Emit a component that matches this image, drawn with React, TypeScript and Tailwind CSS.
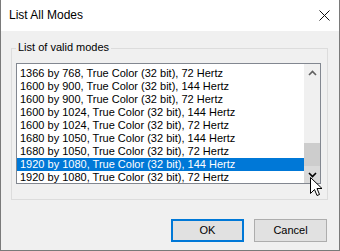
import React from "react";

const modes = [
  "1366 by 768, True Color (32 bit), 72 Hertz",
  "1600 by 900, True Color (32 bit), 144 Hertz",
  "1600 by 900, True Color (32 bit), 72 Hertz",
  "1600 by 1024, True Color (32 bit), 144 Hertz",
  "1600 by 1024, True Color (32 bit), 72 Hertz",
  "1680 by 1050, True Color (32 bit), 144 Hertz",
  "1680 by 1050, True Color (32 bit), 72 Hertz",
  "1920 by 1080, True Color (32 bit), 144 Hertz",
  "1920 by 1080, True Color (32 bit), 72 Hertz",
];

export default function App() {
  return (
    <div
      className="relative w-[340px] h-[251px] flex flex-col border-x border-b border-[#7a7a7a] bg-[#f0f0f0] text-black overflow-hidden"
      style={{ fontFamily: '"Liberation Sans", Arial, sans-serif' }}
    >
      {/* Title bar */}
      <div className="h-[31px] shrink-0 bg-white flex items-center justify-between pl-[8px] pr-[9px]">
        <span className="text-[12px] leading-[14px] mt-[-1px]">List All Modes</span>
        <svg width="11" height="11" viewBox="0 0 11 11" className="mt-[-1px]">
          <path d="M0.5 0.5 L10.5 10.5 M10.5 0.5 L0.5 10.5" stroke="#111" strokeWidth="1" fill="none" />
        </svg>
      </div>

      {/* Body */}
      <div className="flex-1 flex flex-col pl-[10px] pr-[11px]">
        {/* Group box */}
        <div className="relative mt-[17px] h-[152px] border border-[#dcdcdc] pl-[4px] pt-[14px]">
          <span className="absolute left-[4px] top-[-8px] px-[2px] bg-[#f0f0f0] text-[11px] leading-[13px]">
            List of valid modes
          </span>
          {/* Listbox */}
          <div className="w-[305px] h-[121px] border border-[#828790] bg-white flex">
            <div className="flex-1 overflow-hidden pt-[3px]">
              {modes.map((m, i) => {
                const sel = i === 7;
                return (
                  <div
                    key={i}
                    className={
                      "h-[13px] text-[11px] leading-[13px] pl-[3px] whitespace-nowrap " +
                      (sel ? "bg-[#0078d7] text-white" : "text-black")
                    }
                  >
                    {m}
                  </div>
                );
              })}
            </div>
            {/* Scrollbar */}
            <div className="w-[16px] bg-[#f0f0f0] flex flex-col">
              <div className="h-[17px] flex items-center justify-center">
                <svg width="9" height="6" viewBox="0 0 9 6">
                  <path d="M1 5 L4.5 1.5 L8 5" stroke="#606060" strokeWidth="1.6" fill="none" />
                </svg>
              </div>
              <div className="flex-1 flex flex-col justify-end">
                <div className="h-[23px] bg-[#cdcdcd]" />
              </div>
              <div className="h-[17px] bg-[#dadada] flex items-center justify-center">
                <svg width="9" height="6" viewBox="0 0 9 6">
                  <path d="M1 1 L4.5 4.5 L8 1" stroke="#000" strokeWidth="1.6" fill="none" />
                </svg>
              </div>
            </div>
          </div>
        </div>

        {/* Buttons */}
        <div className="mt-[19px] flex justify-end gap-[10px] pr-[1px]">
          <button className="w-[73px] h-[23px] border-2 border-[#0078d7] bg-[#e1e1e1] text-[11px] leading-[13px] text-black">
            OK
          </button>
          <button className="w-[73px] h-[23px] border border-[#adadad] bg-[#e1e1e1] text-[11px] leading-[13px] text-black">
            Cancel
          </button>
        </div>
      </div>

      {/* Mouse cursor */}
      <svg
        className="absolute left-[309px] top-[177px]"
        width="13"
        height="21"
        viewBox="0 0 13 21"
      >
        <path
          d="M0.5 0.5 L0.5 16.5 L4.5 12.5 L7 18.5 L9.5 17.5 L7 11.5 L12 11.5 Z"
          fill="#fff"
          stroke="#000"
          strokeWidth="1"
          strokeLinejoin="miter"
        />
      </svg>
    </div>
  );
}
